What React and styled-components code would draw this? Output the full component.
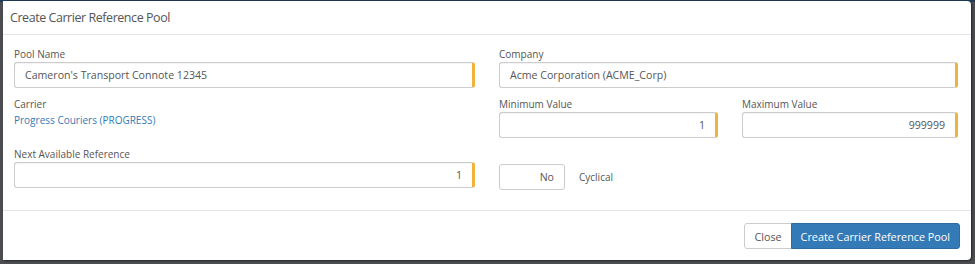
import React from "react";
import styled, { createGlobalStyle } from "styled-components";

const Global = createGlobalStyle`
  html, body { margin: 0; padding: 0; }
  body {
    background: #4b4d50;
    font-family: "Open Sans", "Liberation Sans", sans-serif;
    width: 975px;
    height: 264px;
    overflow: hidden;
  }
`;

const Backdrop = styled.div`
  height: 264px;
  padding: 1px 4px 0 3px;
  box-sizing: border-box;
  background: linear-gradient(#1d3b57 0, #1d3b57 2px, #4b4d50 2px);
`;

const Modal = styled.div`
  background: #fff;
  border-radius: 0 4px 4px 0;
  height: 259px;
  display: flex;
  flex-direction: column;
  box-shadow: 1px 1px 2px rgba(0, 0, 0, 0.5);
`;

const Header = styled.div`
  height: 33px;
  display: flex;
  align-items: center;
  padding: 0 7px;
  border-bottom: 1px solid #e5e5e5;
`;

const Title = styled.h4`
  margin: 0;
  font-size: 12.5px;
  letter-spacing: -0.45px;
  font-weight: 400;
  color: #555;
`;

const Body = styled.div`
  padding: 11px 13px 0 11px;
  height: 164px;
  display: grid;
  grid-template-columns: 461px 459px;
  column-gap: 24px;
  align-content: start;
  border-bottom: 1px solid #e5e5e5;
`;

const Column = styled.div`
  display: flex;
  flex-direction: column;
  gap: 8px;
`;

const Pair = styled.div`
  display: grid;
  grid-template-columns: 219px 216px;
  column-gap: 24px;
`;

const Field = styled.div`
  display: flex;
  flex-direction: column;
  margin-top: ${(p) => p.$offset || 0}px;
`;

const Label = styled.label`
  font-size: 10px;
  line-height: 16px;
  color: #555;
`;

const Input = styled.div`
  height: 26px;
  box-sizing: border-box;
  border: 1px solid #ccc;
  border-right: 3px solid #f0b23a;
  border-radius: 3px;
  display: flex;
  align-items: center;
  justify-content: ${(p) => (p.$right ? "flex-end" : "flex-start")};
  padding: 0 10px;
  font-size: 10.6px;
  color: #555;
  box-shadow: inset 0 1px 1px rgba(0, 0, 0, 0.05);
`;

const Link = styled.a`
  font-size: 10px;
  line-height: 16px;
  color: #337ab7;
  text-decoration: none;
`;

const ToggleRow = styled.div`
  display: flex;
  align-items: center;
  gap: 14px;
  margin-top: 18px;
`;

const Toggle = styled.div`
  width: 66px;
  height: 26px;
  box-sizing: border-box;
  border: 1px solid #ccc;
  border-radius: 3px;
  display: flex;
  align-items: center;
  justify-content: flex-end;
  padding-right: 10px;
  font-size: 10.6px;
  color: #555;
`;

const ToggleLabel = styled.span`
  font-size: 10px;
  color: #555;
`;

const Footer = styled.div`
  flex: 1;
  display: flex;
  justify-content: flex-end;
  align-items: flex-start;
  padding: 12px 11px 0 0;
`;

const Button = styled.button`
  height: 26px;
  font-family: inherit;
  font-size: 10.8px;
  padding: 0 9px;
  border: 1px solid ${(p) => (p.$primary ? "#2e6da4" : "#ccc")};
  background: ${(p) => (p.$primary ? "#337ab7" : "#fff")};
  color: ${(p) => (p.$primary ? "#fff" : "#555")};
  border-radius: ${(p) => (p.$primary ? "0 3px 3px 0" : "3px 0 0 3px")};
  ${(p) => (p.$primary ? "margin-left: -1px;" : "")}
  cursor: pointer;
`;

export default function App() {
  return (
    <>
      <Global />
      <Backdrop>
        <Modal>
          <Header>
            <Title>Create Carrier Reference Pool</Title>
          </Header>
          <Body>
            <Column>
              <Field>
                <Label>Pool Name</Label>
                <Input>Cameron's Transport Connote 12345</Input>
              </Field>
              <Field>
                <Label>Carrier</Label>
                <Link href="#">Progress Couriers (PROGRESS)</Link>
              </Field>
              <Field $offset={10}>
                <Label>Next Available Reference</Label>
                <Input $right>1</Input>
              </Field>
            </Column>
            <Column>
              <Field>
                <Label>Company</Label>
                <Input>Acme Corporation (ACME_Corp)</Input>
              </Field>
              <Pair>
                <Field>
                  <Label>Minimum Value</Label>
                  <Input $right>1</Input>
                </Field>
                <Field>
                  <Label>Maximum Value</Label>
                  <Input $right>999999</Input>
                </Field>
              </Pair>
              <ToggleRow>
                <Toggle>No</Toggle>
                <ToggleLabel>Cyclical</ToggleLabel>
              </ToggleRow>
            </Column>
          </Body>
          <Footer>
            <Button>Close</Button>
            <Button $primary>Create Carrier Reference Pool</Button>
          </Footer>
        </Modal>
      </Backdrop>
    </>
  );
}
